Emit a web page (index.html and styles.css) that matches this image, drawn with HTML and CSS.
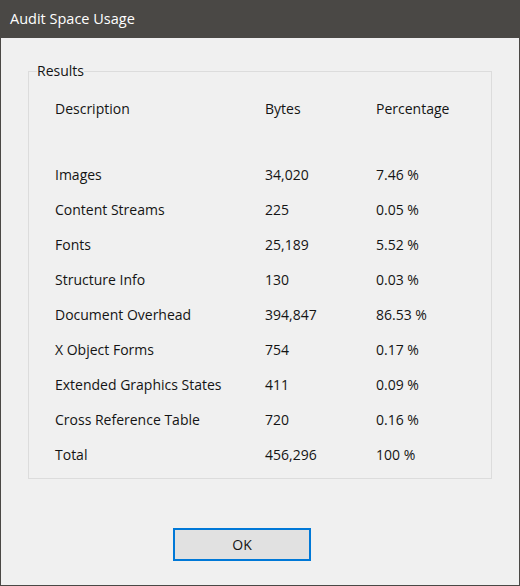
FILE: index.html
```html
<!DOCTYPE html>
<html>
<head>
<meta charset="utf-8">
<link rel="stylesheet" href="styles.css">
</head>
<body>
<div class="window">
  <div class="titlebar">Audit Space Usage</div>
  <div class="client">
    <fieldset class="group">
      <legend class="legend">Results</legend>
      <div class="table">
        <div class="row head"><span>Description</span><span>Bytes</span><span>Percentage</span></div>
        <div class="rows">
          <div class="row"><span>Images</span><span>34,020</span><span>7.46 %</span></div>
          <div class="row"><span>Content Streams</span><span>225</span><span>0.05 %</span></div>
          <div class="row"><span>Fonts</span><span>25,189</span><span>5.52 %</span></div>
          <div class="row"><span>Structure Info</span><span>130</span><span>0.03 %</span></div>
          <div class="row"><span>Document Overhead</span><span>394,847</span><span>86.53 %</span></div>
          <div class="row"><span>X Object Forms</span><span>754</span><span>0.17 %</span></div>
          <div class="row"><span>Extended Graphics States</span><span>411</span><span>0.09 %</span></div>
          <div class="row"><span>Cross Reference Table</span><span>720</span><span>0.16 %</span></div>
          <div class="row"><span>Total</span><span>456,296</span><span>100 %</span></div>
        </div>
      </div>
    </fieldset>
    <div class="buttons"><button class="ok">OK</button></div>
  </div>
</div>
</body>
</html>
```
FILE: styles.css
```css
html, body {
  margin: 0;
  padding: 0;
  background: #f0f0f0;
}
.window {
  width: 520px;
  height: 586px;
  box-sizing: border-box;
  display: flex;
  flex-direction: column;
  font-family: "Open Sans", "Noto Sans", sans-serif;
  font-size: 14px;
  color: #141414;
  background: #f0f0f0;
  border: 1px solid #4a4845;
  border-top: none;
}
.titlebar {
  height: 38px;
  margin: 0 -1px;
  background: #4a4845;
  color: #ffffff;
  font-size: 14.5px;
  line-height: 38px;
  padding-left: 10px;
  flex: none;
}
.client {
  flex: 1;
  display: flex;
  flex-direction: column;
}
.group {
  margin: 23px 0 0 27px;
  width: 464px;
  height: 418px;
  box-sizing: border-box;
  border: 1px solid #dcdcdc;
  padding: 0 0 0 8px;
}
.legend {
  padding: 0;
  line-height: 20px;
  margin-left: 0;
}
.table {
  margin: 10px 0 0 18px;
  display: flex;
  flex-direction: column;
}
.row {
  display: grid;
  grid-template-columns: 210px 111px 1fr;
  height: 35px;
  line-height: 35px;
}
.rows {
  margin-top: 31px;
}
.buttons {
  margin-top: 49px;
  padding-left: 172px;
}
.ok {
  width: 138px;
  height: 33px;
  box-sizing: border-box;
  border: 2px solid #0078d7;
  background: #e1e1e1;
  font-family: inherit;
  font-size: 14px;
  color: #141414;
  padding: 0;
}
```
